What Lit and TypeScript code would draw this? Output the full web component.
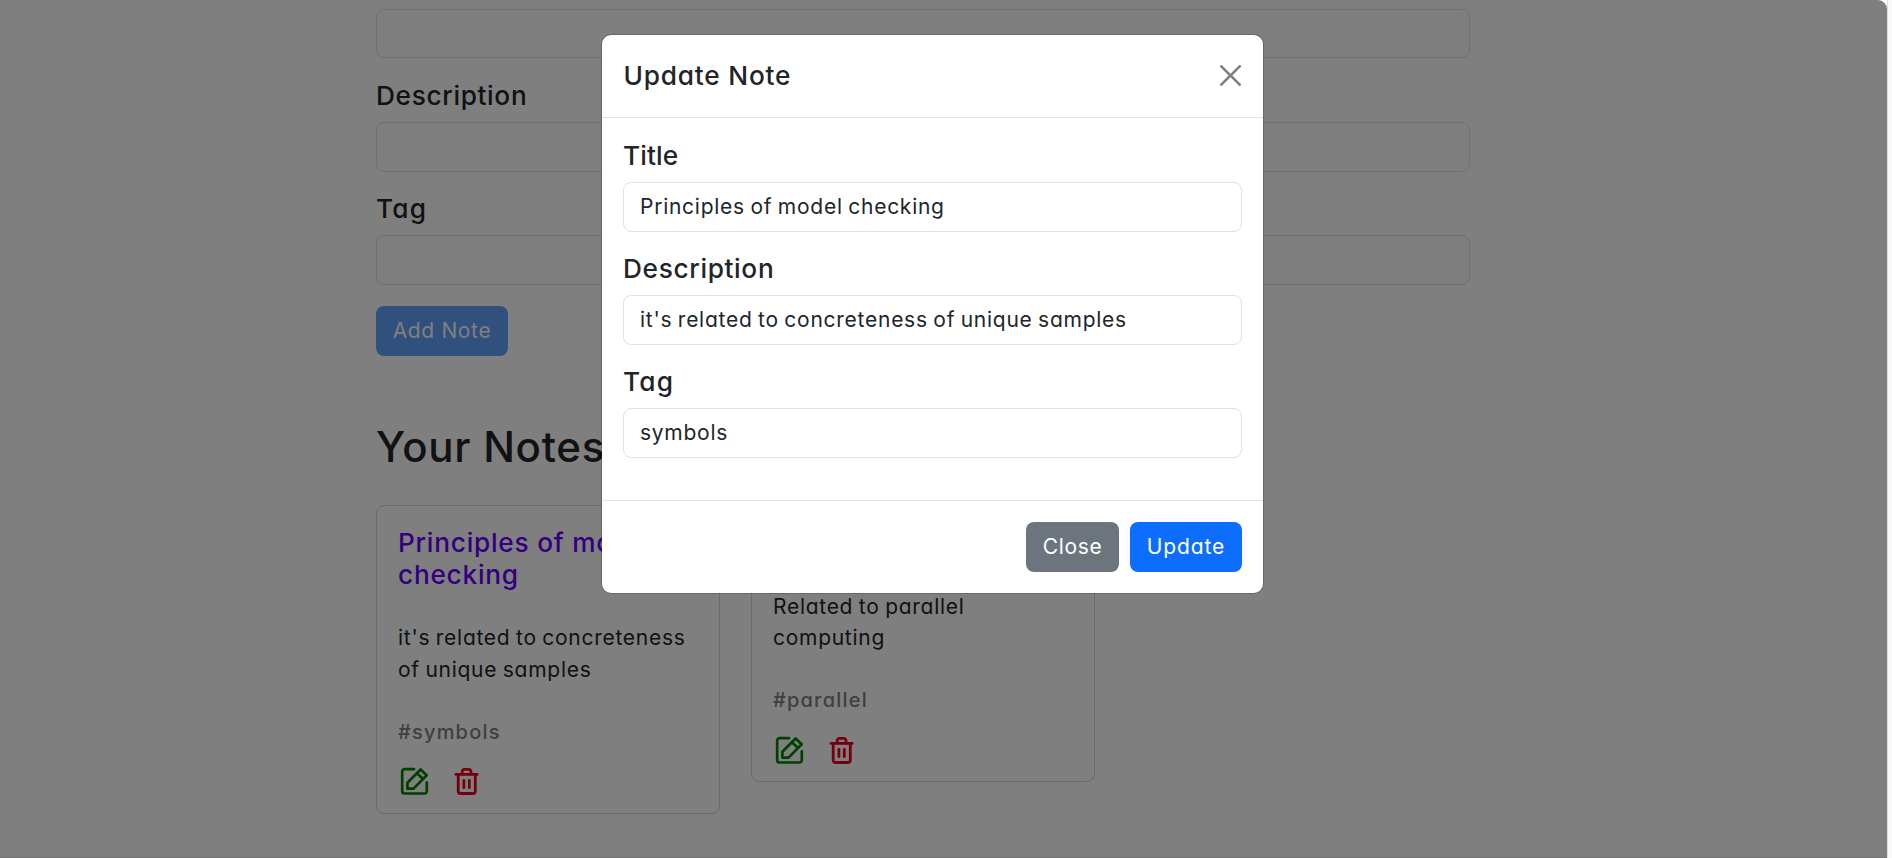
import { LitElement, html, css } from 'lit';
import { customElement, property } from 'lit/decorators.js';

const editIcon = html`<svg class="icon" viewBox="0 0 29 28" fill="none" stroke="#008000" stroke-width="2.7" stroke-linecap="round" stroke-linejoin="round">
  <path d="M14 2.2H4.4A2.2 2.2 0 0 0 2.2 4.4V24.3A2.2 2.2 0 0 0 4.4 26.5H24.6A2.2 2.2 0 0 0 26.8 24.3V15.4" />
  <path d="M7.4 15.8L20.6 2.5L26.7 8.3L13.6 21.6H7.4Z M17 6.2L23 12" />
</svg>`;

const trashIcon = html`<svg class="icon" viewBox="0 0 29 28" fill="none" stroke="#eb001b" stroke-width="2.8" stroke-linecap="round" stroke-linejoin="round">
  <path d="M2 7.4H23.2" />
  <path d="M8.2 7V4.6A2.2 2.2 0 0 1 10.4 2.4H14.8A2.2 2.2 0 0 1 17 4.6V7" />
  <path d="M4.2 8V24.2A2.4 2.4 0 0 0 6.6 26.5H18.9A2.4 2.4 0 0 0 21.3 24.2V8" />
  <path d="M9.9 13.3V20.7M15.3 13.3V20.7" />
</svg>`;

const base = css`
  * { box-sizing: border-box; }
  h1, h2, h3, p { margin: 0; font-weight: 500; }
  button { font: inherit; border: 0; letter-spacing: inherit; cursor: pointer; }
`;

@customElement('note-field')
class NoteField extends LitElement {
  @property() label = '';
  @property() value = '';
  static styles = [base, css`
    :host { display: block; }
    .label { display: block; height: 31.5px; margin-bottom: 10.5px; font-size: 26.25px; line-height: 31.5px; font-weight: 500; letter-spacing: 0.65px; }
    .title { letter-spacing: 0.1px; }
    .tag { letter-spacing: 1.2px; }
    .input { display: block; width: 100%; height: 50px; padding: 0 16px; border: 1px solid #dee2e6; border-radius: 8px; background: #fff; color: #212529; font: inherit; font-feature-settings: inherit; letter-spacing: 0.74px; word-spacing: -1.1px; outline: none; }
  `];
  render() {
    return html`
      <label class="label ${this.label.toLowerCase()}">${this.label}</label>
      <input class="input" .value=${this.value} />`;
  }
}

@customElement('note-card')
class NoteCard extends LitElement {
  @property() heading = '';
  @property() text = '';
  @property() tag = '';
  static styles = [base, css`
    :host { display: block; width: 344px; padding: 21px 21px 17.5px; border: 1px solid #d3d4d5; border-radius: 8px; }
    .heading { font-size: 26.25px; line-height: 31.5px; color: #6600ff; letter-spacing: 0.75px; }
    .text { margin-top: 32px; line-height: 31.5px; font-weight: 400; letter-spacing: 0.72px; word-spacing: -1px; }
    .tag { margin-top: 34.5px; font-size: 20px; line-height: 25px; color: #808080; letter-spacing: 1.2px; }
    .actions { display: flex; gap: 25px; margin-top: 22.5px; padding-left: 2px; }
    .icon { display: block; width: 29px; height: 28px; }
  `];
  render() {
    return html`
      <h3 class="heading">${this.heading}</h3>
      <p class="text">${this.text}</p>
      <p class="tag">#${this.tag}</p>
      <div class="actions">${editIcon}${trashIcon}</div>`;
  }
}

@customElement('app-root')
class AppRoot extends LitElement {
  static styles = [base, css`
    :host { display: block; position: relative; height: 858px; overflow: hidden; background: #f8f8f8; color: #212529; font-family: Inter, "Open Sans", sans-serif; font-size: 21px; font-feature-settings: "cv11"; }
    .page { width: 1887px; height: 858px; padding: 9px 417px 0 376px; overflow: hidden; background: #fff; border-bottom: 1px solid #ebebeb; }
    .edge { position: absolute; inset: 0 4px 0 auto; width: 1px; background: #dcdcdc; }
    .form { display: flex; flex-direction: column; gap: 21px; }
    .first { height: 49px; margin-bottom: 1px; border: 1px solid #dee2e6; border-radius: 8px; }
    .submit { display: flex; }
    .btn { height: 50px; padding: 0 0 2px; border-radius: 8px; color: #fff; background: #0d6efd; font-feature-settings: inherit; }
    .add { width: 132px; opacity: 0.65; letter-spacing: 0.65px; }
    .notes { margin-top: 66px; font-size: 42px; line-height: 50px; letter-spacing: 0.7px; }
    .cards { display: flex; align-items: flex-start; gap: 31px; margin-top: 33px; }
    .backdrop { position: absolute; inset: 0 5px 0 0; background: rgba(0, 0, 0, 0.5); border-top-right-radius: 9px; }
    .dialog { position: absolute; left: 601px; top: 34px; width: 663px; height: 560px; display: flex; flex-direction: column; border: 1px solid rgba(0, 0, 0, 0.175); border-radius: 10px; background: #fff; background-clip: padding-box; }
    .header { height: 83px; display: flex; align-items: center; justify-content: space-between; padding: 0 22px 0 21.5px; border-bottom: 1px solid #dee2e6; }
    .name { font-size: 26.25px; line-height: 40px; letter-spacing: 0.8px; }
    .close { display: block; width: 21px; height: 21px; margin-bottom: 2px; }
    .body { flex: 1; display: flex; flex-direction: column; gap: 21px; padding: 21.5px 21px 0; }
    .footer { height: 93px; display: flex; justify-content: flex-end; gap: 11px; padding: 21px; border-top: 1px solid #dee2e6; }
    .secondary { width: 93px; background: #6c757d; letter-spacing: 0.65px; }
    .primary { width: 112px; letter-spacing: 0.9px; }
  `];
  render() {
    return html`
      <main class="page">
        <div class="form">
          <div class="first"></div>
          <note-field label="Description"></note-field>
          <note-field label="Tag"></note-field>
          <div class="submit"><button class="btn add">Add Note</button></div>
        </div>
        <h1 class="notes">Your Notes</h1>
        <div class="cards">
          <note-card heading="Principles of model checking" text="it's related to concreteness of unique samples" tag="symbols"></note-card>
          <note-card heading="Parallel" text="Related to parallel computing" tag="parallel"></note-card>
        </div>
      </main>
      <div class="edge"></div>
      <div class="backdrop"></div>
      <section class="dialog" role="dialog">
        <header class="header">
          <h2 class="name">Update Note</h2>
          <svg class="close" viewBox="0 0 16 16" fill="#000" fill-opacity="0.5"><path d="M.293.293a1 1 0 0 1 1.414 0L8 6.586 14.293.293a1 1 0 1 1 1.414 1.414L9.414 8l6.293 6.293a1 1 0 0 1-1.414 1.414L8 9.414l-6.293 6.293a1 1 0 0 1-1.414-1.414L6.586 8 .293 1.707a1 1 0 0 1 0-1.414z" /></svg>
        </header>
        <div class="body">
          <note-field label="Title" value="Principles of model checking"></note-field>
          <note-field label="Description" value="it's related to concreteness of unique samples"></note-field>
          <note-field label="Tag" value="symbols"></note-field>
        </div>
        <footer class="footer">
          <button class="btn secondary">Close</button>
          <button class="btn primary">Update</button>
        </footer>
      </section>`;
  }
}
